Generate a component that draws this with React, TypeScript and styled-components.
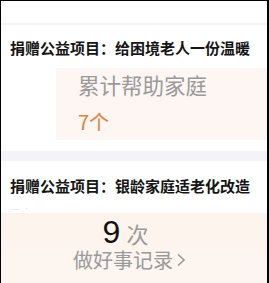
import styled, { createGlobalStyle } from 'styled-components'

const GlobalStyle = createGlobalStyle`
  html, body {
    margin: 0;
    padding: 0;
    background: #ffffff;
  }
  body {
    font-family: "Noto Sans CJK SC", "Noto Sans", sans-serif;
  }
`

const Frame = styled.div`
  width: 269px;
  height: 283px;
  box-sizing: border-box;
  border-top: 1px solid #000;
  border-left: 1px solid #000;
  border-right: 2px solid #000;
  overflow: hidden;
  background: #fff;
`

const TopBar = styled.div`
  height: 22px;
  border-bottom: 2px solid #f4f4f4;
`

const Section = styled.section<{ $top: number }>`
  padding: ${(p) => p.$top}px 0 0 9px;
`

const Title = styled.h3`
  margin: 0;
  font-size: 15px;
  line-height: 20px;
  font-weight: 700;
  color: #151515;
  white-space: nowrap;
`

const StatCard = styled.div`
  margin: 10px 0 0 46px;
  height: 72px;
  background: #fdf6f3;
  padding: 4px 0 0 22px;
  box-sizing: border-box;
`

const StatLabel = styled.div`
  font-size: 21.5px;
  line-height: 26px;
  color: #9a9a9a;
`

const StatValue = styled.div`
  margin-top: 11px;
  font-size: 20px;
  line-height: 26px;
  color: #e1803f;
`

const Band = styled.div`
  height: 10px;
  margin-top: 11px;
  background: #f4f4f6;
`

const Faint = styled.div`
  margin-top: 9px;
  height: 8px;
  font-size: 6px;
  line-height: 8px;
  color: #e2e2e2;
  letter-spacing: 1px;
`

const RecordCard = styled.div`
  margin-left: -9px;
  height: 72px;
  background: linear-gradient(180deg, #fdf3ed 0%, #fdf6f0 100%);
  display: flex;
  flex-direction: column;
  align-items: center;
  padding-top: 3px;
  box-sizing: border-box;
`

const CountRow = styled.div`
  display: flex;
  align-items: baseline;
  gap: 6px;
  height: 32px;
  margin-right: 17px;
`

const CountNum = styled.span`
  font-family: "Liberation Sans", Arial, sans-serif;
  font-size: 32px;
  line-height: 32px;
  color: #111;
`

const CountUnit = styled.span`
  font-size: 22px;
  line-height: 26px;
  color: #9a9a9a;
`

const RecordLink = styled.div`
  display: flex;
  align-items: center;
  gap: 3px;
  margin-right: 9px;
  font-size: 20px;
  line-height: 24px;
  color: #9a9a9a;
`

export default function App() {
  return (
    <>
      <GlobalStyle />
      <Frame>
        <TopBar />
        <Section $top={13}>
          <Title>捐赠公益项目：给困境老人一份温暖</Title>
          <StatCard>
            <StatLabel>累计帮助家庭</StatLabel>
            <StatValue>7个</StatValue>
          </StatCard>
        </Section>
        <Band />
        <Section $top={15}>
          <Title>捐赠公益项目：银龄家庭适老化改造</Title>
          <Faint>—— ·</Faint>
          <RecordCard>
            <CountRow>
              <CountNum>9</CountNum>
              <CountUnit>次</CountUnit>
            </CountRow>
            <RecordLink>
              做好事记录
              <svg width="10" height="14" viewBox="0 0 10 14">
                <path d="M2 1.5 L8 7 L2 12.5" fill="none" stroke="#9a9a9a" strokeWidth="1.6" />
              </svg>
            </RecordLink>
          </RecordCard>
        </Section>
      </Frame>
    </>
  )
}
